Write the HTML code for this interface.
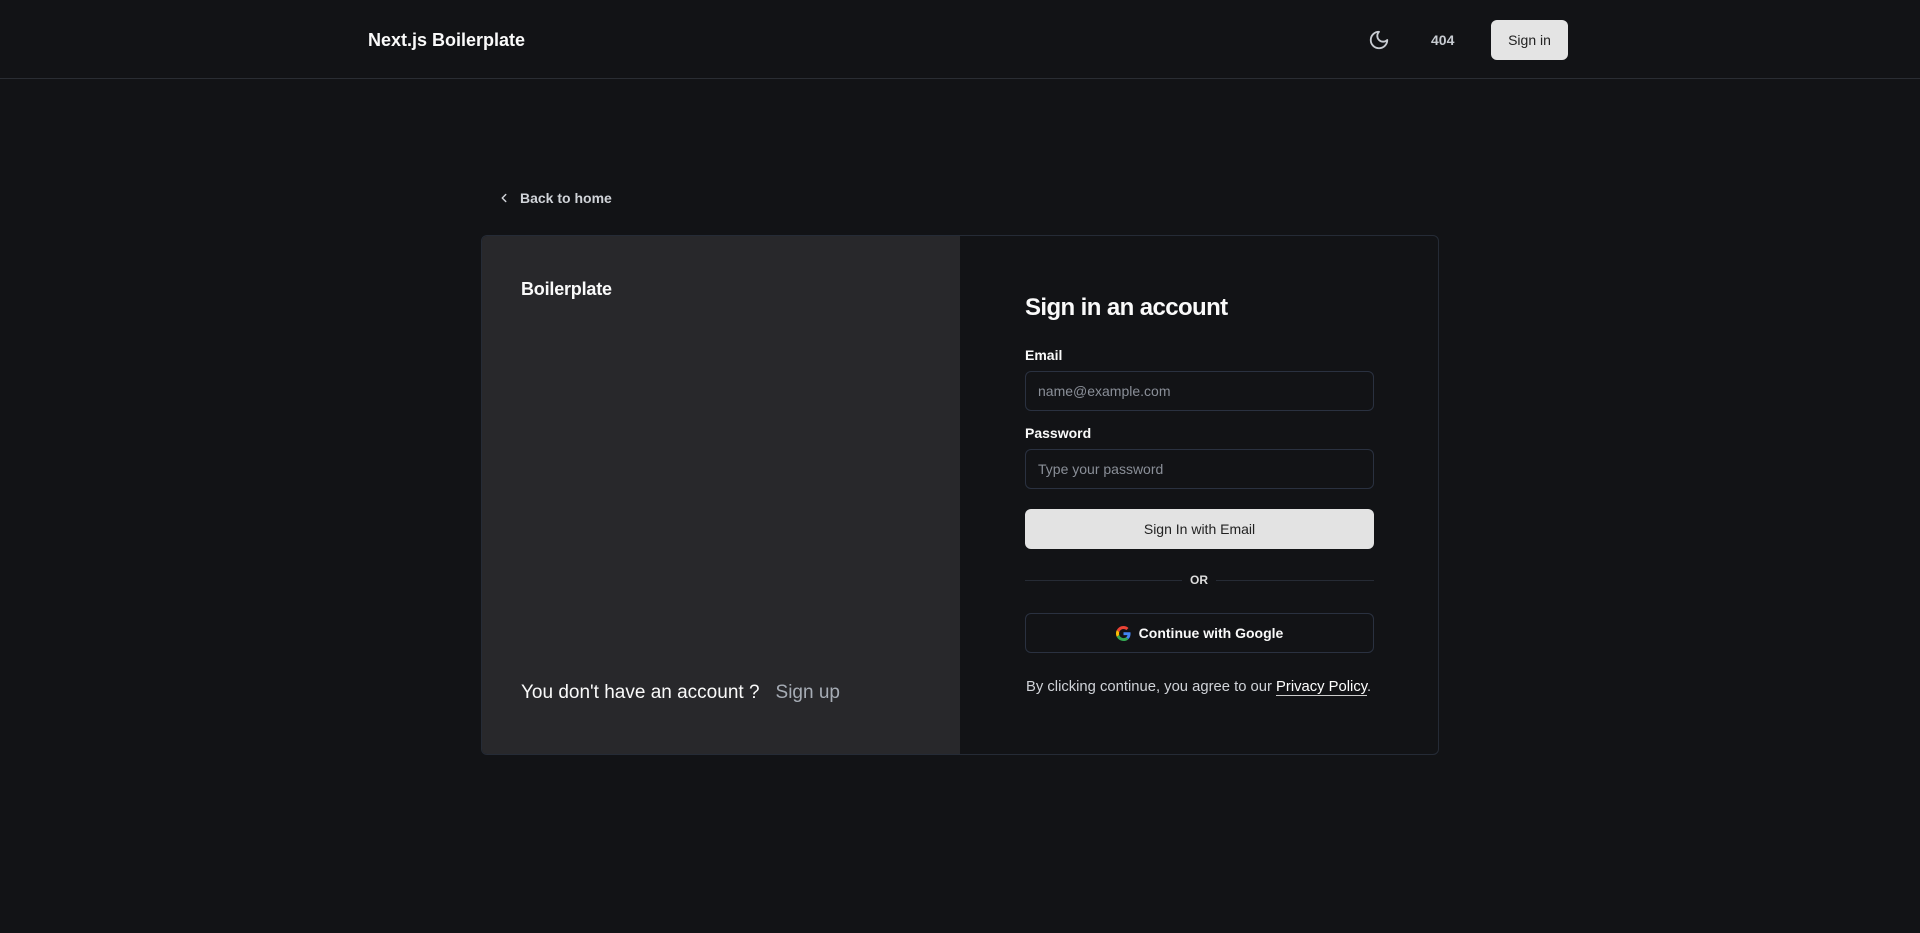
<!DOCTYPE html>
<html><head><meta charset="utf-8"><style>
*{box-sizing:border-box;margin:0;padding:0}
body{width:1920px;height:933px;background:#121316;font-family:"Liberation Sans",sans-serif;color:#fafafa;position:relative;overflow:hidden}
.a{position:absolute}
header{position:absolute;left:0;top:0;width:1920px;height:79px;border-bottom:1px solid #2a2d33}
.inp{position:absolute;left:1025px;width:349px;height:40px;border:1px solid #2a3140;border-radius:6px;color:#8a8f98;font-size:14px;padding-left:12px;line-height:38px}
</style></head><body>
<header>
<div class="a" style="left:368px;top:30px;font-size:18px;font-weight:bold">Next.js Boilerplate</div>
<svg class="a" style="left:1368px;top:29px" width="22" height="22" viewBox="0 0 24 24" fill="none" stroke="#c8ccd2" stroke-width="2" stroke-linecap="round" stroke-linejoin="round"><path d="M12 3a6 6 0 0 0 9 9 9 9 0 1 1-9-9Z"/></svg>
<div class="a" style="left:1431px;top:32px;font-size:14px;color:#c8ccd2;font-weight:bold">404</div>
<div class="a" style="left:1491px;top:20px;width:77px;height:40px;background:#e4e4e4;border-radius:6px;color:#222;font-size:14px;text-align:center;line-height:40px">Sign in</div>
</header>
<svg class="a" style="left:497px;top:191px" width="14" height="14" viewBox="0 0 24 24" fill="none" stroke="#d0d3d8" stroke-width="2.5" stroke-linecap="round" stroke-linejoin="round"><path d="M15 18l-6-6 6-6"/></svg>
<div class="a" style="left:520px;top:190px;font-size:14px;color:#d0d3d8;font-weight:bold">Back to home</div>
<div class="a" style="left:481px;top:235px;width:958px;height:520px;border:1px solid #252b36;border-radius:6px;overflow:hidden">
<div class="a" style="left:0;top:0;width:478px;height:520px;background:#28282b"></div>
</div>
<div class="a" style="left:521px;top:279px;font-size:18px;font-weight:bold;letter-spacing:-0.2px">Boilerplate</div>
<div class="a" style="left:521px;top:682px;font-size:19px">You don't have an account ?<span style="color:#a6acb5;margin-left:16px">Sign up</span></div>
<div class="a" style="left:1025px;top:294px;font-size:24px;font-weight:bold;letter-spacing:-0.6px">Sign in an account</div>
<div class="a" style="left:1025px;top:347px;font-size:14px;font-weight:bold">Email</div>
<div class="inp" style="top:371px">name@example.com</div>
<div class="a" style="left:1025px;top:425px;font-size:14px;font-weight:bold">Password</div>
<div class="inp" style="top:449px">Type your password</div>
<div class="a" style="left:1025px;top:509px;width:349px;height:40px;background:#e3e3e3;border-radius:6px;color:#222;font-size:14px;text-align:center;line-height:40px">Sign In with Email</div>
<div class="a" style="left:1025px;top:580px;width:157px;height:1px;background:#262b35"></div>
<div class="a" style="left:1216px;top:580px;width:158px;height:1px;background:#262b35"></div>
<div class="a" style="left:1190px;top:573px;font-size:12px;font-weight:bold;color:#ddd">OR</div>
<div class="a" style="left:1025px;top:613px;width:349px;height:40px;border:1px solid #2a3140;border-radius:6px;font-size:14px;font-weight:bold;text-align:center;line-height:38px">
<svg style="vertical-align:-3px;margin-right:8px" width="15" height="15" viewBox="0 0 48 48"><path fill="#EA4335" d="M24 9.5c3.5 0 6.6 1.2 9.1 3.6l6.8-6.8C35.8 2.4 30.3 0 24 0 14.6 0 6.6 5.4 2.6 13.2l7.9 6.2C12.4 13.7 17.7 9.5 24 9.5z"/><path fill="#4285F4" d="M46.5 24.5c0-1.6-.1-3.1-.4-4.5H24v9h12.7c-.6 2.9-2.2 5.4-4.7 7.1l7.6 5.9c4.4-4.1 6.9-10.1 6.9-17.5z"/><path fill="#FBBC05" d="M10.5 28.6c-.5-1.4-.8-3-.8-4.6s.3-3.2.8-4.6l-7.9-6.2C.9 16.5 0 20.1 0 24s.9 7.5 2.6 10.8l7.9-6.2z"/><path fill="#34A853" d="M24 48c6.5 0 11.9-2.1 15.9-5.8L32.3 36.3c-2.1 1.4-4.9 2.3-8.3 2.3-6.3 0-11.6-4.2-13.5-9.9l-7.9 6.2C6.6 42.6 14.6 48 24 48z"/></svg>Continue with Google</div>
<div class="a" style="left:1026px;top:679px;font-size:14.8px;color:#d0d3d8">By clicking continue, you agree to our <span style="color:#fff;border-bottom:1px solid #ccc">Privacy Policy</span>.</div>
</body></html>
